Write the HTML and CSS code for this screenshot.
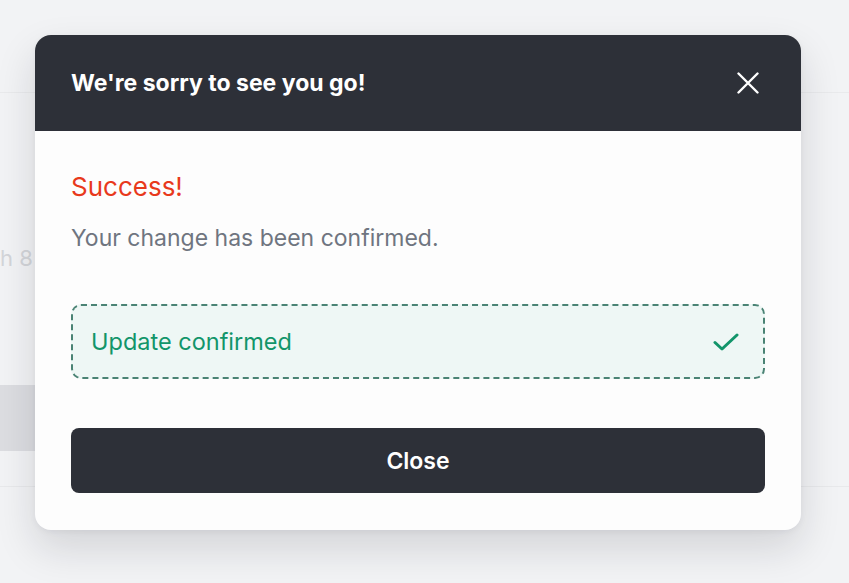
FILE: index.html
```html
<!DOCTYPE html>
<html lang="en">
<head>
<meta charset="utf-8">
<title>We're sorry to see you go</title>
<link rel="stylesheet" href="styles.css">
</head>
<body>
<div class="page">
  <div class="topbar"></div>
  <div class="content">
    <p class="ghost-text">h 8</p>
    <div class="ghost-block"></div>
  </div>
  <div class="footer-line"></div>
</div>

<div class="modal" role="dialog" aria-labelledby="modal-title">
  <div class="modal-header">
    <h2 id="modal-title" class="modal-title">We're sorry to see you go!</h2>
    <button class="icon-btn" aria-label="Close">
      <svg width="22" height="22" viewBox="0 0 22 22" fill="none" stroke="#ffffff" stroke-width="2.4" stroke-linecap="round"><path d="M1.5 1.5L20.5 20.5M20.5 1.5L1.5 20.5"/></svg>
    </button>
  </div>
  <div class="modal-body">
    <p class="status">Success!</p>
    <p class="desc">Your change has been confirmed.</p>
    <div class="confirm-box">
      <span class="confirm-text">Update confirmed</span>
      <svg class="check" width="26" height="20" viewBox="0 0 26 20" fill="none" stroke="#12956a" stroke-width="3" stroke-linecap="round" stroke-linejoin="round"><path d="M2 10.5L9 17L24 3"/></svg>
    </div>
    <button class="primary-btn">Close</button>
  </div>
</div>
</body>
</html>
```
FILE: styles.css
```css
* { box-sizing: border-box; }
html, body { margin: 0; padding: 0; }
body {
  background: #f2f3f5;
  font-family: Inter, "Noto Sans", sans-serif;
  width: 849px;
  height: 583px;
  overflow: hidden;
  position: relative;
}
.page { display: flex; flex-direction: column; }
.topbar { height: 93px; border-bottom: 1px solid #e9eaec; }
.content { padding-top: 150px; }
.ghost-text {
  margin: 0;
  font-size: 22px;
  line-height: 30px;
  color: #d3d5d9;
}
.ghost-block {
  margin-top: 112px;
  width: 420px;
  height: 66px;
  background: #dcdde1;
}
.footer-line { margin-top: 35px; height: 1px; background: #e8e9eb; }

.modal {
  position: absolute;
  left: 35px;
  top: 35px;
  width: 766px;
  border-radius: 16px;
  background: #fdfdfd;
  overflow: hidden;
  box-shadow: 0 18px 40px rgba(20, 24, 32, 0.14), 0 2px 6px rgba(20, 24, 32, 0.05);
}
.modal-header {
  height: 96px;
  background: #2d3038;
  display: flex;
  align-items: center;
  justify-content: space-between;
  padding: 0 42px 0 36px;
}
.modal-title {
  margin: 0;
  color: #ffffff;
  font-size: 23px;
  font-weight: 700;
  letter-spacing: 0;
}
.icon-btn {
  background: none;
  border: 0;
  padding: 0;
  width: 22px;
  height: 22px;
  display: flex;
  cursor: pointer;
}
.modal-body {
  padding: 40px 36px 37px;
  display: flex;
  flex-direction: column;
}
.status {
  margin: 0;
  color: #e8391c;
  font-size: 26px;
  line-height: 32px;
}
.desc {
  margin: 21px 0 0;
  color: #6f7580;
  font-size: 23px;
  line-height: 28px;
}
.confirm-box {
  margin-top: 52px;
  height: 75px;
  border: 2px dashed #4a8374;
  border-radius: 10px;
  background: #eef7f5;
  display: flex;
  align-items: center;
  justify-content: space-between;
  padding: 0 24px 0 18px;
}
.confirm-text {
  color: #12956a;
  font-size: 23.5px;
}
.check { display: block; }
.primary-btn {
  margin-top: 49px;
  height: 65px;
  border: 0;
  border-radius: 8px;
  background: #2d3038;
  color: #ffffff;
  font-family: Inter, "Noto Sans", sans-serif;
  font-size: 23px;
  font-weight: 600;
  cursor: pointer;
}
```
